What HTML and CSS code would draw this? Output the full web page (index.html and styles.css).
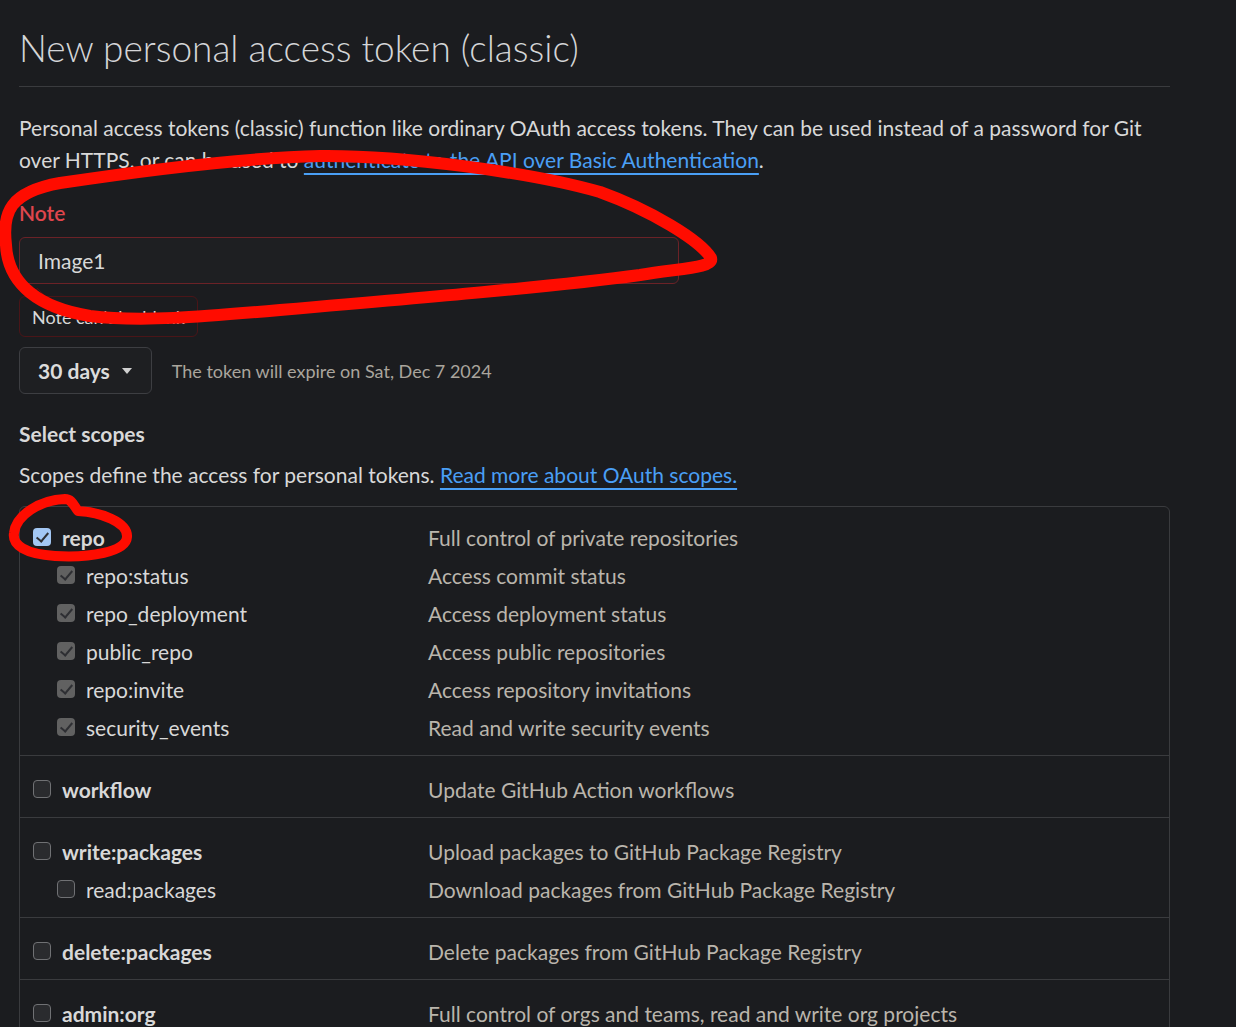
FILE: index.html
```html
<!DOCTYPE html>
<html lang="en">
<head>
<meta charset="utf-8">
<title>New personal access token (classic)</title>
<link rel="stylesheet" href="styles.css">
</head>
<body>
<main class="page">
  <h1 class="subhead">New personal access token (classic)</h1>
  <p class="intro">Personal access tokens (classic) function like ordinary OAuth access tokens. They can be used instead of a password for Git over HTTPS, or can be used to <a href="#" class="link">authenticate to the API over Basic Authentication</a>.</p>

  <div class="field">
    <label class="label-error" for="note">Note</label>
    <input id="note" class="input input-error" type="text" value="Image1">
    <div class="error-tip">Note can't be blank</div>
  </div>

  <div class="expiry">
    <button class="select-btn" type="button">30 days <span class="caret"></span></button>
    <span class="expire-note">The token will expire on Sat, Dec 7 2024</span>
  </div>

  <h3 class="scopes-title">Select scopes</h3>
  <p class="scopes-desc">Scopes define the access for personal tokens. <a href="#" class="link">Read more about OAuth scopes.</a></p>

  <div class="scopes">
    <div class="group">
      <div class="row"><span class="label"><span class="cb cb-on"></span><span class="name strong">repo</span></span><span class="desc">Full control of private repositories</span></div>
      <div class="row"><span class="label sub"><span class="cb cb-dis"></span><span class="name">repo:status</span></span><span class="desc">Access commit status</span></div>
      <div class="row"><span class="label sub"><span class="cb cb-dis"></span><span class="name">repo_deployment</span></span><span class="desc">Access deployment status</span></div>
      <div class="row"><span class="label sub"><span class="cb cb-dis"></span><span class="name">public_repo</span></span><span class="desc">Access public repositories</span></div>
      <div class="row"><span class="label sub"><span class="cb cb-dis"></span><span class="name">repo:invite</span></span><span class="desc">Access repository invitations</span></div>
      <div class="row"><span class="label sub"><span class="cb cb-dis"></span><span class="name">security_events</span></span><span class="desc">Read and write security events</span></div>
    </div>
    <div class="group">
      <div class="row"><span class="label"><span class="cb"></span><span class="name strong">workflow</span></span><span class="desc">Update GitHub Action workflows</span></div>
    </div>
    <div class="group">
      <div class="row"><span class="label"><span class="cb"></span><span class="name strong">write:packages</span></span><span class="desc">Upload packages to GitHub Package Registry</span></div>
      <div class="row"><span class="label sub"><span class="cb"></span><span class="name">read:packages</span></span><span class="desc">Download packages from GitHub Package Registry</span></div>
    </div>
    <div class="group">
      <div class="row"><span class="label"><span class="cb"></span><span class="name strong">delete:packages</span></span><span class="desc">Delete packages from GitHub Package Registry</span></div>
    </div>
    <div class="group">
      <div class="row"><span class="label"><span class="cb"></span><span class="name strong">admin:org</span></span><span class="desc">Full control of orgs and teams, read and write org projects</span></div>
    </div>
  </div>
</main>

<svg class="annotations" width="1236" height="1027" viewBox="0 0 1236 1027" aria-hidden="true">
  <path d="M 60 183 C 120 174, 230 158, 320 156 C 400 155, 530 172, 600 192 C 650 210, 700 240, 711 258 C 714 268, 680 268, 640 275 C 560 286, 420 298, 280 310 C 200 317, 140 322, 90 316 C 40 308, 8 285, 6 245 C 2 212, 10 192, 60 183" />
  <path class="thin" d="M 78 511 C 100 512, 128 522, 127 537 C 126 552, 90 558, 55 556 C 25 554, 12 545, 14 533 C 16 515, 40 500, 65 499 C 72 499, 74 506, 78 511" />
</svg>
</body>
</html>
```
FILE: styles.css
```css
* { box-sizing: border-box; }

html, body {
  margin: 0;
  background: #1b1c1f;
}

body {
  font-family: Lato, "Open Sans", sans-serif;
  color: #d8d8d8;
  font-size: 21px;
  overflow: hidden;
  height: 1027px;
}

.page {
  width: 1170px;
  padding-left: 19px;
}

.subhead {
  margin: 0;
  padding-top: 24px;
  padding-bottom: 14px;
  font-size: 37px;
  font-weight: 300;
  line-height: 48px;
  color: #d4d5d7;
  border-bottom: 1px solid #3a3b3e;
}

.intro {
  margin: 25px 0 0;
  line-height: 32px;
}

.link {
  color: #4a9ff5;
  text-decoration: underline;
  text-decoration-thickness: 2px;
  text-underline-offset: 5px;
}

.field {
  margin-top: 22px;
  display: flex;
  flex-direction: column;
  align-items: flex-start;
}

.label-error {
  color: #e0464d;
  font-weight: 600;
  line-height: 30px;
}

.input {
  margin-top: 9px;
  width: 660px;
  height: 47px;
  padding: 0 18px;
  background: #1e1f22;
  border: 1px solid #6b2227;
  border-radius: 6px;
  color: #d8d8d8;
  font-family: inherit;
  font-size: 21px;
  outline: none;
}

.error-tip {
  position: relative;
  margin-top: 12px;
  height: 41px;
  padding: 0 12px;
  display: flex;
  align-items: center;
  border: 1px solid #4a1518;
  border-radius: 6px;
  font-size: 18px;
  color: #d8d8d8;
}

.error-tip::before {
  content: "";
  position: absolute;
  top: -7px;
  left: 12px;
  width: 10px;
  height: 10px;
  background: #1b1c1f;
  border-top: 1px solid #4a1518;
  border-left: 1px solid #4a1518;
  transform: rotate(45deg);
}

.expiry {
  margin-top: 10px;
  display: flex;
  align-items: center;
  gap: 20px;
}

.select-btn {
  height: 47px;
  padding: 0 19px 0 18px;
  display: flex;
  align-items: center;
  gap: 12px;
  background: #1e1f22;
  border: 1px solid #3d3e42;
  border-radius: 6px;
  color: #dcdcdc;
  font-family: inherit;
  font-size: 21px;
  font-weight: 700;
}

.caret {
  width: 0;
  height: 0;
  border-left: 5px solid transparent;
  border-right: 5px solid transparent;
  border-top: 6px solid #d0d0d0;
}

.expire-note {
  font-size: 18px;
  color: #aaa59d;
}

.scopes-title {
  margin: 27px 0 0;
  font-size: 21px;
  font-weight: 700;
  line-height: 26px;
}

.scopes-desc {
  margin: 14px 0 0;
  line-height: 28px;
}

.scopes {
  margin-top: 17px;
  border: 1px solid #3a3b3e;
  border-radius: 6px;
}

.group {
  padding: 14px 0 9px;
  border-top: 1px solid #3a3b3e;
}

.group:first-child {
  border-top: 0;
  padding-top: 11px;
}

.row {
  display: grid;
  grid-template-columns: 395px 1fr;
  padding-left: 13px;
  height: 38px;
  align-items: center;
}

.label {
  display: flex;
  align-items: center;
  gap: 11px;
}

.label.sub {
  padding-left: 24px;
}

.name.strong {
  font-weight: 700;
}

.desc {
  color: #bab5ac;
}

.cb {
  width: 18px;
  height: 18px;
  flex: none;
  border-radius: 4px;
  background: #2a2b2e;
  border: 1px solid #707174;
  position: relative;
}

.cb-on,
.cb-dis {
  border: 0;
}

.cb-on { background: #a3c7f4; }
.cb-dis { background: #616161; }

.cb-on::after,
.cb-dis::after {
  content: "";
  position: absolute;
  left: 6px;
  top: 2px;
  width: 5px;
  height: 10px;
  border-right: 2px solid #2e2f33;
  border-bottom: 2px solid #2e2f33;
  transform: rotate(40deg);
}

.annotations {
  position: absolute;
  top: 0;
  left: 0;
  pointer-events: none;
}

.annotations path {
  fill: none;
  stroke: #ff0c00;
  stroke-width: 12;
  stroke-linecap: round;
  stroke-linejoin: round;
}

.annotations path.thin {
  stroke-width: 10;
}
```
